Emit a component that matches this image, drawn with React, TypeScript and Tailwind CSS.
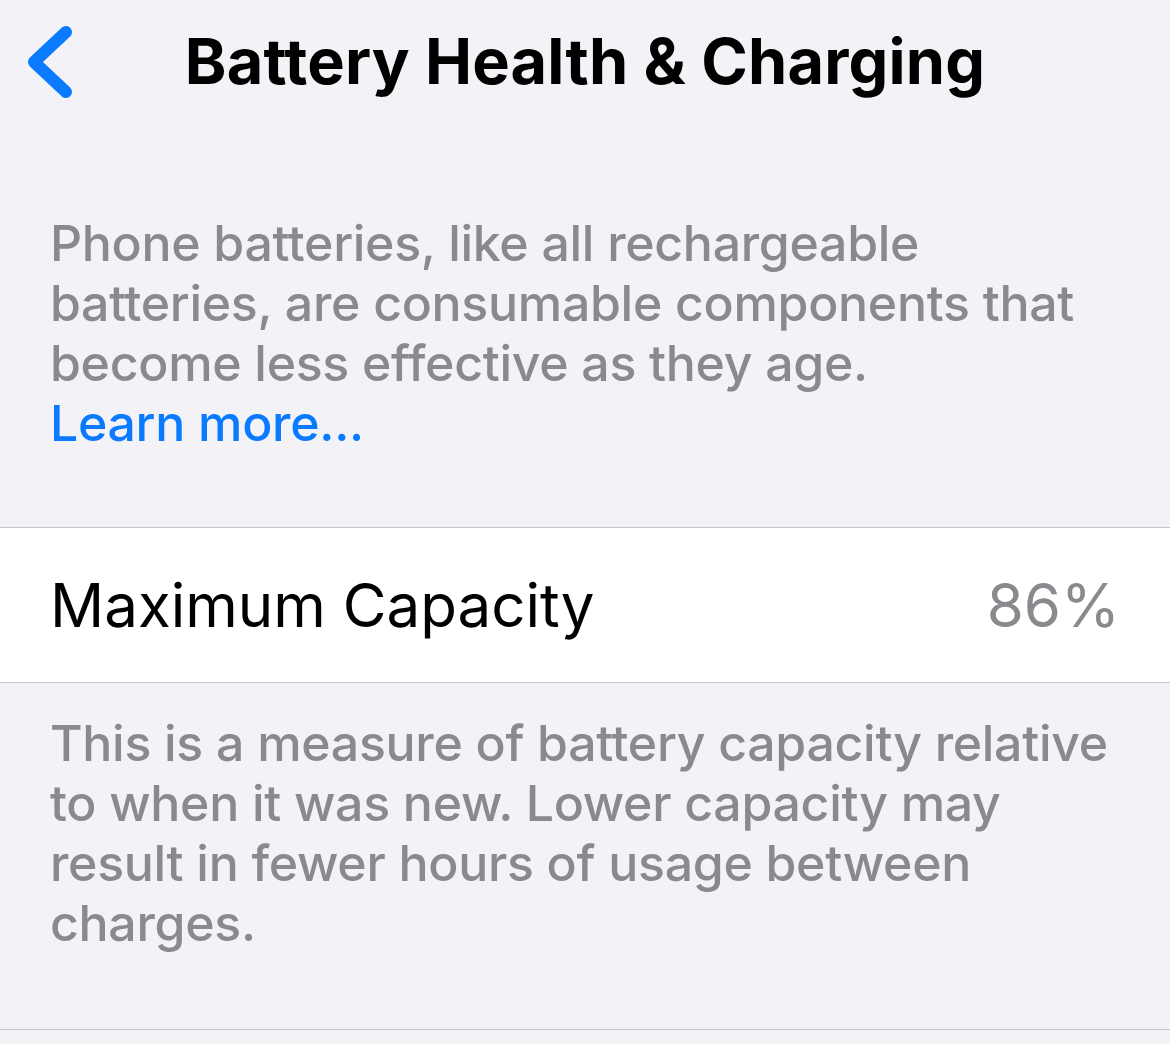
import React from 'react';

const ChevronLeft: React.FC = () => (
    <svg width="48" height="80" viewBox="0 0 48 80" fill="none">
        <path d="M38 8 L6 38 L38 68" stroke="#0a7aff" strokeWidth="12" strokeLinecap="round" strokeLinejoin="round" />
    </svg>
);

export default function App() {
    return (
        <div className="w-[1170px] h-[1044px] bg-[#f2f2f7] overflow-hidden font-['Inter',sans-serif] antialiased">
            {/* Nav bar */}
            <div className="relative h-[125px] flex items-center justify-center">
                <button className="absolute left-[28px] top-[24px]">
                    <ChevronLeft />
                </button>
                <h1 className="text-[63px] font-bold tracking-[0.2px] text-black -mt-[2px]">
                    Battery Health &amp; Charging
                </h1>
            </div>

            {/* Intro */}
            <div className="px-[50px] pt-[88px] pb-[74px] text-[50px] font-[450] tracking-[-0.3px] leading-[60px] text-[#8a8a8e]">
                <p>
                    Phone batteries, like all rechargeable batteries, are consumable components that become less effective as they age.
                </p>
                <a className="text-[#0a7aff]">Learn more...</a>
            </div>

            {/* Capacity row */}
            <div className="h-[156px] bg-white border-y border-[#c6c6c8] flex items-center justify-between px-[50px]">
                <span className="text-[60px] text-black">Maximum Capacity</span>
                <span className="text-[60px] text-[#8a8a8e]">86%</span>
            </div>

            {/* Footer note */}
            <div className="px-[50px] pt-[30px] pb-[76px] text-[50px] font-[450] tracking-[-0.3px] leading-[60px] text-[#8a8a8e]">
                This is a measure of battery capacity relative to when it was new. Lower capacity may result in fewer hours of usage between charges.
            </div>
            <div className="border-t border-[#c6c6c8]" />
        </div>
    );
}
